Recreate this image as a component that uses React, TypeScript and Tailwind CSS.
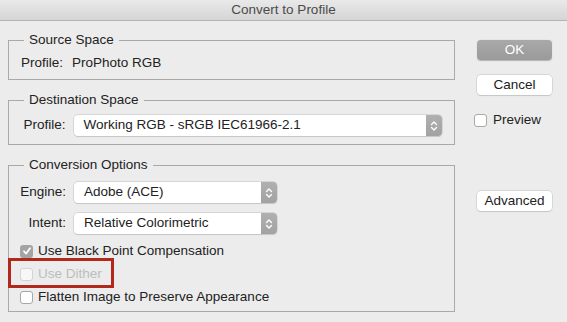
import { FC, ReactNode } from "react";

const font = { fontFamily: "'Liberation Sans', Arial, sans-serif" };

const Stepper: FC = () => (
  <div className="w-[16px] self-stretch rounded-r-[4px] bg-gradient-to-b from-[#b0b0b0] to-[#a2a2a2] flex items-center justify-center">
    <svg width="8" height="12" viewBox="0 0 8 12" fill="none" stroke="white" strokeWidth="1.4" strokeLinecap="round" strokeLinejoin="round">
      <path d="M1.5 4.5 L4 2 L6.5 4.5" />
      <path d="M1.5 7.5 L4 10 L6.5 7.5" />
    </svg>
  </div>
);

const Select: FC<{ value: string; width: string }> = ({ value, width }) => (
  <div className={`${width} h-[21px] flex items-stretch rounded-[4px] bg-white shadow-[0_0_0_0.5px_#c4c4c4,0_0.5px_1px_rgba(0,0,0,0.15)]`}>
    <div className="flex-1 flex items-center pl-[10px] text-[13.5px] text-[#222]">{value}</div>
    <Stepper />
  </div>
);

const Checkbox: FC<{ checked?: boolean; disabled?: boolean }> = ({ checked, disabled }) => (
  <div
    className={
      checked
        ? "w-[13px] h-[13px] rounded-[3px] bg-[#a4a4a4] flex items-center justify-center"
        : disabled
        ? "w-[13px] h-[13px] rounded-[3px] bg-white/60 border border-[#d4d4d4]"
        : "w-[13px] h-[13px] rounded-[3px] bg-white border border-[#a8a8a8]"
    }
  >
    {checked && (
      <svg width="10" height="10" viewBox="0 0 10 10" fill="none" stroke="white" strokeWidth="1.8" strokeLinecap="round" strokeLinejoin="round">
        <path d="M2 5.3 L4.2 7.6 L8 2.2" />
      </svg>
    )}
  </div>
);

const Group: FC<{ title: string; className?: string; children: ReactNode }> = ({ title, className, children }) => (
  <fieldset className={`min-w-0 border border-[#a9a9a9] pl-[12px] pr-[12px] ${className ?? ""}`}>
    <legend className="ml-[3px] px-[5px] text-[13.5px] leading-[16px] text-[#222]">{title}</legend>
    {children}
  </fieldset>
);

const Button: FC<{ children: ReactNode; primary?: boolean }> = ({ children, primary }) => (
  <div
    className={
      primary
        ? "w-[75px] h-[20px] rounded-[4px] bg-gradient-to-b from-[#a9a9a9] to-[#9a9a9a] text-white text-[13.5px] flex items-center justify-center shadow-[0_0.5px_1px_rgba(0,0,0,0.25)]"
        : "w-[75px] h-[20px] rounded-[4px] bg-white text-[#222] text-[13.5px] flex items-center justify-center shadow-[0_0_0_0.5px_#c4c4c4,0_0.5px_1px_rgba(0,0,0,0.15)]"
    }
  >
    {children}
  </div>
);

const App: FC = () => {
  return (
    <div className="w-[567px] h-[322px] bg-[#ececec] overflow-hidden flex flex-col" style={font}>
      {/* Title bar */}
      <div className="h-[21px] shrink-0 bg-gradient-to-b from-[#e9e9e9] to-[#d5d5d5] border-b border-[#b4b4b4] flex items-center justify-center text-[13.5px] text-[#4b4b4b]">
        Convert to Profile
      </div>

      <div className="flex flex-1">
        {/* Left column */}
        <div className="ml-[8px] w-[447px] shrink-0 flex flex-col pt-[11px]">
          <Group title="Source Space" className="pb-[8px]">
            <div className="pt-[7px] h-[23px] flex items-center text-[13.5px] text-[#222]">
              <span className="w-[51px]">Profile:</span>
              <span>ProPhoto RGB</span>
            </div>
          </Group>

          <Group title="Destination Space" className="mt-[12px] pb-[8px]">
            <div className="pt-[7px] flex items-center text-[13.5px] text-[#222]">
              <span className="w-[49px] text-right pr-[8px] -ml-[4px] box-content">Profile:</span>
              <Select value="Working RGB - sRGB IEC61966-2.1" width="w-[372px]" />
            </div>
          </Group>

          <Group title="Conversion Options" className="mt-[12px] pb-[6px]">
            <div className="pt-[9px] flex flex-col text-[13.5px] text-[#222]">
              <div className="flex items-center">
                <span className="w-[53px] text-right pr-[8px] -ml-[8px] box-content">Engine:</span>
                <Select value="Adobe (ACE)" width="w-[203px]" />
              </div>
              <div className="flex items-center mt-[10px]">
                <span className="w-[53px] text-right pr-[8px] -ml-[8px] box-content">Intent:</span>
                <Select value="Relative Colorimetric" width="w-[203px]" />
              </div>
              <div className="flex items-center gap-[5px] h-[16px] mt-[9px] -ml-[1px]">
                <Checkbox checked />
                <span>Use Black Point Compensation</span>
              </div>
              <div className="relative flex items-center gap-[5px] h-[16px] mt-[7px] -ml-[1px] w-fit">
                <Checkbox disabled />
                <span className="text-[#bdbdbd]">Use Dither</span>
                <div className="absolute -left-[12px] -top-[8px] w-[106px] h-[30px] border-[3px] border-[#b0291c]" />
              </div>
              <div className="flex items-center gap-[5px] h-[16px] mt-[7px] -ml-[1px]">
                <Checkbox />
                <span>Flatten Image to Preserve Appearance</span>
              </div>
            </div>
          </Group>
        </div>

        {/* Right column */}
        <div className="ml-[19px] flex flex-col pt-[19px]">
          <div className="ml-[3px]">
            <Button primary>OK</Button>
          </div>
          <div className="ml-[3px] mt-[15px]">
            <Button>Cancel</Button>
          </div>
          <div className="mt-[15px] flex items-center gap-[6px] text-[13.5px] text-[#222]">
            <Checkbox />
            <span>Preview</span>
          </div>
          <div className="ml-[3px] mt-[61px]">
            <Button>Advanced</Button>
          </div>
        </div>
      </div>
    </div>
  );
};

export default App;
